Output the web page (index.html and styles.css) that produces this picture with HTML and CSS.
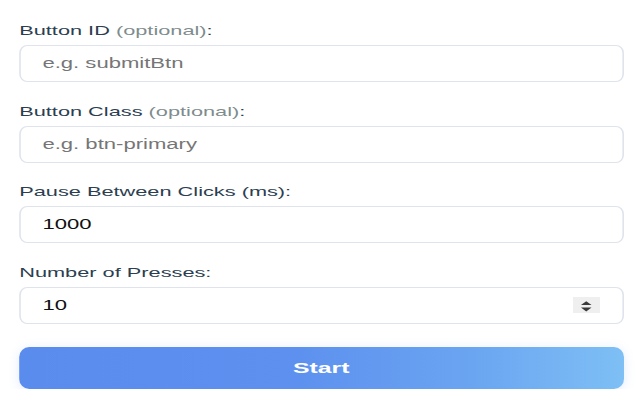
FILE: index.html
```html
<!DOCTYPE html>
<html lang="en">
<head>
<meta charset="utf-8">
<title>Auto Clicker</title>
<link rel="stylesheet" href="styles.css">
</head>
<body>
<div class="app">
  <div class="field">
    <label class="label" for="bid">Button ID <span class="opt">(optional)</span>:</label>
    <input class="input" id="bid" type="text" placeholder="e.g. submitBtn">
  </div>
  <div class="field">
    <label class="label" for="bclass">Button Class <span class="opt">(optional)</span>:</label>
    <input class="input" id="bclass" type="text" placeholder="e.g. btn-primary">
  </div>
  <div class="field">
    <label class="label" for="pause">Pause Between Clicks (ms):</label>
    <input class="input" id="pause" type="number" value="1000">
  </div>
  <div class="field field-last">
    <label class="label" for="count">Number of Presses:</label>
    <div class="num-wrap">
      <input class="input" id="count" type="number" value="10">
      <svg class="spinner" viewBox="0 0 17.5 16" width="17.5" height="16" aria-hidden="true">
        <rect x="0" y="0" width="17.5" height="16" fill="#efefef"/>
        <polygon points="5.1,8 11.7,8 8.4,4.2" fill="#3a3a3a"/>
        <polygon points="5.1,10.6 11.7,10.6 8.4,14.6" fill="#3a3a3a"/>
      </svg>
    </div>
  </div>
  <button class="start" type="button">Start</button>
</div>
</body>
</html>
```
FILE: styles.css
```css
html, body {
  margin: 0;
  padding: 0;
  background: #ffffff;
  overflow: hidden;
}

.app {
  width: 400px;
  box-sizing: border-box;
  padding: 23px 10.5px 0 12px;
  transform: scaleX(1.6);
  transform-origin: 0 0;
  font-family: "Liberation Sans", Arial, Helvetica, sans-serif;
}

.field {
  display: flex;
  flex-direction: column;
  margin-bottom: 21.7px;
}

.field-last {
  margin-bottom: 23px;
}

.label {
  font-size: 13.6px;
  line-height: 16px;
  color: #2c3e50;
  margin-bottom: 6px;
}

.opt {
  color: #7f8c8d;
}

.input {
  display: block;
  width: 100%;
  height: 37px;
  box-sizing: border-box;
  margin: 0;
  padding: 0 10px 0 13.5px;
  border: 1px solid #dfe3ec;
  border-radius: 5px / 8px;
  background: #ffffff;
  font-family: "Liberation Sans", Arial, Helvetica, sans-serif;
  font-size: 13.8px;
  color: #111111;
  outline: none;
  -moz-appearance: textfield;
}

.input::placeholder {
  color: #767676;
}

.input::-webkit-inner-spin-button,
.input::-webkit-outer-spin-button {
  -webkit-appearance: none;
  margin: 0;
}

.num-wrap {
  position: relative;
}

.spinner {
  position: absolute;
  right: 14.4px;
  top: 9.5px;
  display: block;
}

.start {
  display: block;
  width: 100%;
  height: 42px;
  margin: 0;
  border: none;
  border-radius: 6.25px / 10px;
  background: linear-gradient(90deg, #5a8cee 0%, #5d90ef 45%, #6aa5f1 75%, #7ebff5 100%);
  box-shadow: 0 2px 8px rgba(91, 141, 239, 0.18);
  color: #ffffff;
  font-family: "Liberation Sans", Arial, Helvetica, sans-serif;
  font-size: 15.5px;
  font-weight: bold;
  cursor: pointer;
}
```
